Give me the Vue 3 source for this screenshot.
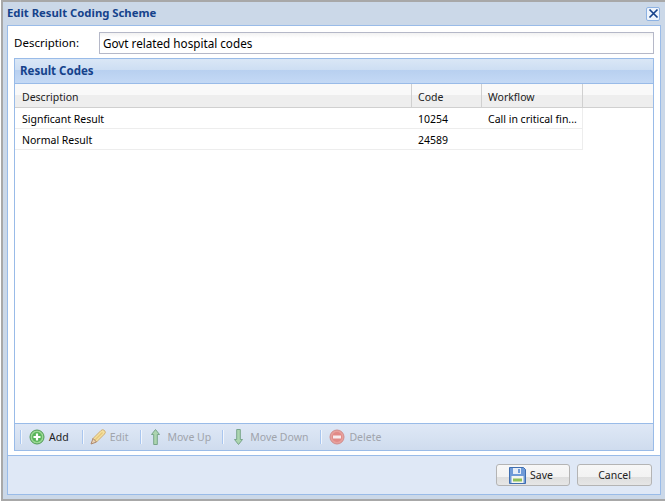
<script setup>
const rows = [
  { desc: 'Signficant Result', code: '10254', flow: 'Call in critical fin...' },
  { desc: 'Normal Result', code: '24589', flow: '' },
]
</script>

<template>
  <div class="window">
    <div class="titlebar">
      <span class="title">Edit Result Coding Scheme</span>
      <button class="close" aria-label="Close">
        <svg width="11" height="11" viewBox="0 0 11 11"><path d="M1.500 1.500 9.500 9.500M9.500 1.500 1.500 9.500" stroke="#15428b" stroke-width="1.7" fill="none"/></svg>
      </button>
    </div>
    <div class="body">
      <div class="content">
        <div class="field">
          <label class="label">Description:</label>
          <div class="input">Govt related hospital codes</div>
        </div>
        <div class="panel">
          <div class="panel-head">Result Codes</div>
          <div class="grid">
            <div class="grid-head">
              <div class="hcell c1">Description</div>
              <div class="hcell c2">Code</div>
              <div class="hcell c3">Workflow</div>
              <div class="hcell fill"></div>
            </div>
            <div class="grid-body">
              <div v-for="r in rows" :key="r.code" class="row">
                <div class="cell c1">{{ r.desc }}</div>
                <div class="cell c2">{{ r.code }}</div>
                <div class="cell c3">{{ r.flow }}</div>
              </div>
            </div>
          </div>
          <div class="toolbar">
            <span class="sep"></span>
            <div class="tool on add">
              <svg width="16" height="16" viewBox="0 0 16 16"><circle cx="8" cy="8" r="7" fill="#9ad894" stroke="#4f9a55"/><circle cx="8" cy="8" r="5" fill="#58b45a"/><path d="M8 4.500v7M4.500 8h7" stroke="#fff" stroke-width="2.200"/></svg>
              <span>Add</span>
            </div>
            <span class="sep"></span>
            <div class="tool">
              <svg width="16" height="16" viewBox="0 0 16 16"><path d="M3 9.500 11 1.500a2 2 0 0 1 3.500 3.500L6.500 13z" fill="#f7e096" stroke="#cfa868"/><path d="M5 11 12.500 3.500" stroke="#e9c46e" stroke-width="1.500"/><path d="M3 9.500 1 15 6.500 13z" fill="#ecd2ae" stroke="#a97f60"/></svg>
              <span>Edit</span>
            </div>
            <span class="sep"></span>
            <div class="tool arrow up">
              <svg width="11" height="16" viewBox="0 0 11 16"><path d="M5.500 .500 9.500 5.500H7.300V15.500H3.700V5.500H1.500z" fill="#a8d4a8" stroke="#6f9f80"/></svg>
              <span>Move Up</span>
            </div>
            <span class="sep"></span>
            <div class="tool arrow down">
              <svg width="11" height="16" viewBox="0 0 11 16"><path d="M5.500 15.500 9.500 10.500H7.300V.5H3.700V10.500H1.500z" fill="#a8d4a8" stroke="#6f9f80"/></svg>
              <span>Move Down</span>
            </div>
            <span class="sep"></span>
            <div class="tool del">
              <svg width="16" height="16" viewBox="0 0 16 16"><circle cx="8" cy="8" r="7" fill="#ea9a94" stroke="#d08482"/><circle cx="8" cy="8" r="5" fill="#e2817c"/><rect x="4" y="6.500" width="8" height="3" fill="#fbeeee"/></svg>
              <span>Delete</span>
            </div>
          </div>
        </div>
      </div>
      <div class="footer">
        <button class="btn save">
          <svg width="17" height="17" viewBox="0 0 17 17"><path d="M.5 .5H14.500L16.500 2.500V16.500H.5z" fill="#6f9bd8" stroke="#3f6eb0"/><rect x="4" y="1" width="8" height="6" fill="#e6edf7"/><rect x="9" y="2" width="2" height="4" fill="#6f9bd8"/><rect x="2.500" y="9" width="12" height="7" fill="#f4f6f0"/><rect x="4" y="11.500" width="9" height="3" fill="#8fc05a"/></svg>
          <span>Save</span>
        </button>
        <button class="btn cancel">Cancel</button>
      </div>
    </div>
  </div>
</template>

<style scoped>
.window {
  margin-left: 1px;
  width: 664px;
  height: 501px;
  box-sizing: border-box;
  background: #cbd8e8;
  border-top: 2px solid #a8a8a8;
  border-left: 2px solid #a8a8a8;
  border-bottom: 2px solid #a8a8a8;
  padding: 0 4px 4px 4px;
  display: flex;
  flex-direction: column;
  font-family: "Noto Sans", sans-serif;
  font-size: 10.5px;
  color: #000;
}
.titlebar {
  height: 23px;
  flex: none;
  display: flex;
  align-items: center;
  justify-content: space-between;
}
.title {
  font-weight: 700;
  color: #15428b;
  font-size: 11.3px;
  margin-bottom: 2px;
}
.close {
  width: 14px;
  height: 14px;
  padding: 0;
  margin-right: 1px;
  box-sizing: border-box;
  border: 1px solid #8db2e3;
  border-radius: 2px;
  background: #eef4fc;
  display: flex;
  align-items: center;
  justify-content: center;
}
.body {
  flex: 1;
  display: flex;
  flex-direction: column;
  border: 1px solid #99bbe8;
  background: #dfe8f6;
  min-height: 0;
}
.content {
  flex: 1;
  min-height: 0;
  background: #fff;
  border-bottom: 1px solid #99bbe8;
  display: flex;
  flex-direction: column;
  padding: 6px 6px 4px 6px;
}
.field {
  display: flex;
  align-items: center;
  height: 22px;
  flex: none;
}
.label {
  width: 85px;
  font-size: 11.5px;
  flex: none;
  margin-bottom: 2px;
}
.input {
  flex: 1;
  height: 22px;
  box-sizing: border-box;
  border: 1px solid #b5b8c8;
  padding: 0 3px;
  font-size: 11.7px;
  line-height: 20px;
  background: linear-gradient(#f2f2f2, #fff 5px);
}
.panel {
  flex: 1;
  min-height: 0;
  margin-top: 4px;
  border: 1px solid #99bbe8;
  display: flex;
  flex-direction: column;
}
.panel-head {
  height: 25px;
  flex: none;
  box-sizing: border-box;
  padding-left: 5px;
  line-height: 24px;
  font-size: 11.5px;
  font-weight: 700;
  color: #15428b;
  border-bottom: 1px solid #99bbe8;
  background: linear-gradient(#dae7f6 0, #cddef3 46%, #b8d0f0 46%, #c4d9f5 100%);
}
.grid {
  flex: 1;
  min-height: 0;
  background: #fff;
}
.grid-head {
  display: flex;
  height: 24px;
  box-sizing: border-box;
  border-bottom: 1px solid #d0d0d0;
  background: linear-gradient(#f9f9f9 0, #f9f9f9 50%, #eeeeee 50%, #eeeeee 100%);
}
.hcell {
  box-sizing: border-box;
  line-height: 26px;
  border-right: 1px solid #d0d0d0;
  color: #222;
  flex: none;
}
.hcell.fill { flex: 1; border-right: none; }
.c1 { width: 397px; padding-left: 7px; }
.c2 { width: 70px; padding-left: 6px; }
.c3 { width: 101px; padding-left: 6px; }
.row {
  display: flex;
  width: 568px;
  height: 21px;
  box-sizing: border-box;
  border-bottom: 1px solid #ededed;
  border-right: 1px solid #ededed;
}
.cell {
  box-sizing: border-box;
  line-height: 22px;
  flex: none;
  white-space: nowrap;
  overflow: hidden;
}
.toolbar {
  height: 27px;
  flex: none;
  box-sizing: border-box;
  border-top: 1px solid #99bbe8;
  background: linear-gradient(#dfe8f6, #cfdcee);
  display: flex;
  align-items: center;
  padding-left: 5px;
}
.sep {
  width: 1px;
  height: 14px;
  background: #a9c6ef;
  border-right: 1px solid #f2f6fc;
  flex: none;
  margin-right: 6px;
}
.tool {
  display: flex;
  align-items: center;
  gap: 4px;
  color: #a0a4ac;
  margin-right: 12px;
}
.tool.add { margin-left: 1px; margin-right: 13px; }
.tool.del { margin-left: 1px; }
.tool.arrow { gap: 6px; }
.tool.up { margin-left: 2px; margin-right: 11px; }
.tool.down { margin-left: 3px; }
.tool.on { color: #222; }
.tool svg { opacity: 0.9; }
.tool.on svg { opacity: 1; }
.footer {
  height: 38px;
  flex: none;
  display: flex;
  justify-content: flex-end;
  align-items: center;
  gap: 7px;
  padding-right: 8px;
}
.btn {
  width: 74px;
  height: 22px;
  box-sizing: border-box;
  border: 1px solid #b4b4b4;
  border-radius: 3px;
  background: linear-gradient(#f7f7f7 0, #f2f2f2 60%, #dedede 60%, #e6e6e6 100%);
  font: inherit;
  color: #222;
  display: flex;
  align-items: center;
  justify-content: center;
  gap: 4px;
  padding: 0;
}
.save { padding-right: 4px; }
.cancel { width: 75px; }
</style>

<style>
html, body { margin: 0; background: #fff; overflow: hidden; }
</style>
